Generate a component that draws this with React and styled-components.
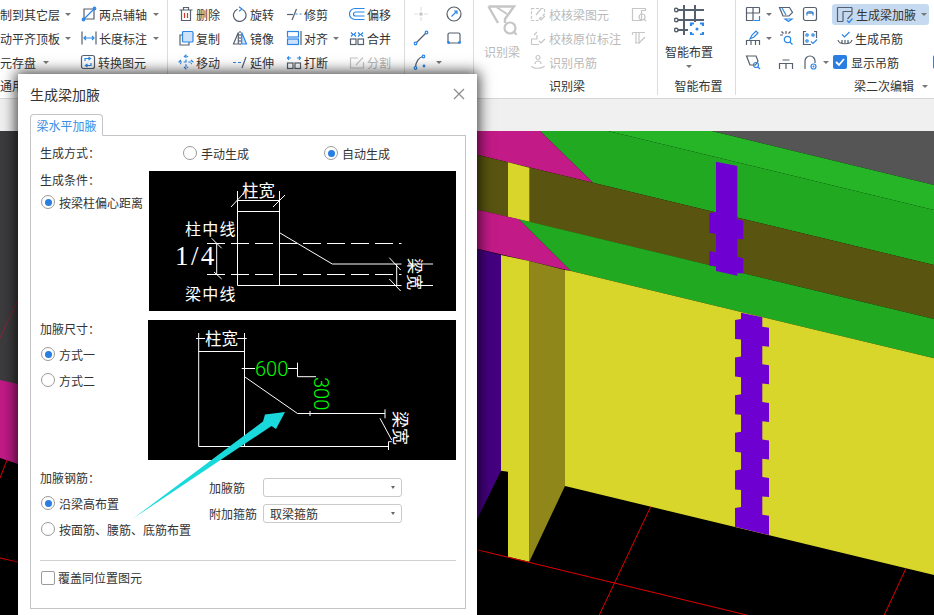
import styled, { createGlobalStyle } from 'styled-components'

const ink = '#333'
const blue = '#2b87e8'
const radioBlue = '#2a7de1'
const lineGray = '#c4c4c8'
const disabled = '#b9b9b9'

const GlobalStyle = createGlobalStyle`
  html, body { margin: 0; padding: 0; background: #f0f0f0; }
  body { font-family: "Noto Sans CJK SC", "Noto Sans", sans-serif; font-size: 12px; color: ${ink}; }
`

const Page = styled.div`
  position: relative;
  width: 934px;
  height: 615px;
  overflow: hidden;
  display: flex;
  flex-direction: column;
`
const Ribbon = styled.div`
  height: 98px;
  display: flex;
  flex-shrink: 0;
  background: #fff;
  border-bottom: 1px solid #d6d6d6;
  overflow: hidden;
`
const Group = styled.div`
  width: ${p => p.$w}px;
  flex-shrink: 0;
  height: 95px;
  box-sizing: border-box;
  padding-left: ${p => p.$pad || 0}px;
  display: flex;
  flex-direction: column;
  border-right: ${p => (p.$last ? 'none' : '1px solid #dcdcdc')};
`
const Tools = styled.div`
  height: 75px;
  padding-top: 2px;
  display: flex;
`
const GroupLabel = styled.div`
  flex: 1;
  display: flex;
  align-items: center;
  justify-content: ${p => p.$align || 'center'};
  gap: 5px;
  padding: ${p => p.$padding || '0'};
  line-height: 18px;
  white-space: nowrap;
`
const Column = styled.div`
  width: ${p => p.$w}px;
  flex-shrink: 0;
  display: flex;
  flex-direction: column;
`
const Tool = styled.div`
  height: 24px;
  display: flex;
  align-items: center;
  gap: ${p => p.$gap ?? 2}px;
  white-space: nowrap;
  color: ${p => (p.$off ? disabled : ink)};
  border-radius: 3px;
  margin-left: ${p => p.$shift || 0}px;
`
const ActiveTool = styled(Tool)`
  width: 97px;
  height: 21px;
  margin: 2px 0 1px;
  padding-left: 4px;
  box-sizing: border-box;
  gap: 2px;
  background: #c5daf1;
`
const Caret = styled.i`
  width: 0;
  height: 0;
  margin-left: ${p => p.$gap ?? 3}px;
  border: 3px solid transparent;
  border-top: 3.5px solid #777;
  border-bottom: 0;
  flex-shrink: 0;
`
const BigTool = styled.div`
  width: ${p => p.$w}px;
  flex-shrink: 0;
  display: flex;
  flex-direction: column;
  align-items: center;
  color: ${p => (p.$off ? disabled : ink)};
  line-height: 18px;
  gap: 8px;
  padding-top: 3px;
`
const BigCaret = styled(Caret)`
  margin: -4px 0 0;
`
const Glyph = styled.svg`
  width: ${p => p.$size || 16}px;
  height: ${p => p.$size || 16}px;
  flex-shrink: 0;
  fill: none;
  stroke: ${p => (p.$off ? '#c6c6c6' : '#56606e')};
  stroke-width: 1.2;
  .b { stroke: ${p => (p.$off ? '#c6c6c6' : blue)}; }
  .r { stroke: #d8352a; }
  .f { fill: #cfe2fa; stroke: ${blue}; }
  .d { fill: ${blue}; stroke: none; }
`
const RibbonCheck = styled.span`
  width: 14px;
  height: 14px;
  flex-shrink: 0;
  border-radius: 2px;
  background: #2a7de1;
  display: flex;
  align-items: center;
  justify-content: center;
  margin-left: ${p => p.$left || 0}px;
`
const Band = styled.div`
  height: 32px;
  flex-shrink: 0;
  background: #f0f0f0;
`
const Scene = styled.svg`
  display: block;
  width: 934px;
  height: 484px;
  flex-shrink: 0;
  background: #000;
`
const Dialog = styled.div`
  position: absolute;
  left: 18px;
  top: 74px;
  width: 459px;
  height: 560px;
  box-sizing: border-box;
  padding: 0 11px 0 12px;
  background: #fff;
  box-shadow: 0 0 13px 2px rgba(0, 0, 0, 0.75);
`
const TitleBar = styled.div`
  height: 40px;
  display: flex;
  align-items: center;
  justify-content: space-between;
  font-size: 14px;
  line-height: 20px;
  padding-right: 1px;
`
const Close = styled.svg`
  width: 12px;
  height: 12px;
  stroke: #8c8c8c;
  stroke-width: 1.2;
`
const Tab = styled.div`
  position: relative;
  z-index: 1;
  width: 73px;
  height: 22px;
  box-sizing: border-box;
  border: 1px solid ${lineGray};
  border-bottom: 1px solid #fff;
  border-radius: 4px 4px 0 0;
  margin-bottom: -1px;
  display: flex;
  align-items: center;
  justify-content: center;
  color: #3a8ee6;
`
const Panel = styled.div`
  height: 474px;
  box-sizing: border-box;
  border: 1px solid ${lineGray};
  padding: 8px 9px 0;
`
const MethodRow = styled.div`
  height: 18px;
  display: grid;
  grid-template-columns: 143px 141px auto;
  align-items: center;
`
const SplitRow = styled.div`
  display: flex;
  margin-top: ${p => p.$top}px;
`
const LeftCol = styled.div`
  width: ${p => p.$w}px;
  flex-shrink: 0;
  display: flex;
  flex-direction: column;
`
const FieldLabel = styled.div`
  height: 18px;
  line-height: 18px;
  white-space: nowrap;
`
const Option = styled.div`
  height: 18px;
  display: flex;
  align-items: center;
  gap: 4px;
  white-space: nowrap;
  margin-top: ${p => p.$top || 0}px;
  margin-left: ${p => p.$left ?? 1}px;
`
const Radio = styled.span`
  width: 14px;
  height: 14px;
  box-sizing: border-box;
  border: 1px solid #9a9a9a;
  border-radius: 50%;
  flex-shrink: 0;
  background: #fff;
  display: flex;
  align-items: center;
  justify-content: center;
  &::after {
    content: '';
    width: 7px;
    height: 7px;
    border-radius: 50%;
    background: ${p => (p.$on ? radioBlue : 'transparent')};
  }
`
const Sketch = styled.svg`
  display: block;
  width: ${p => p.$w}px;
  height: 140px;
  background: #000;
  flex-shrink: 0;
  stroke: #fff;
  stroke-width: 1;
  fill: none;
  text { fill: #fff; stroke: none; font-family: "Noto Sans CJK SC", sans-serif; }
  text.num { fill: #00ff00; font-family: Roboto, "Liberation Sans", sans-serif; font-weight: 300; }
  text.frac { font-family: "Liberation Serif", serif; }
`
const SelectCol = styled.div`
  display: flex;
  flex-direction: column;
  gap: 7px;
  padding-top: 9px;
`
const SelectRow = styled.div`
  display: flex;
  align-items: center;
`
const SelectName = styled.span`
  width: 54px;
  white-space: nowrap;
`
const SelectBox = styled.div`
  width: 139px;
  height: 19px;
  box-sizing: border-box;
  border: 1px solid #cacaca;
  border-radius: 3px;
  padding: 0 6px;
  display: flex;
  align-items: center;
  justify-content: space-between;
`
const SmallCaret = styled(Caret)`
  margin: 0;
  border-width: 3px 2.5px 0;
  border-top-color: #666;
`
const Divider = styled.div`
  height: 1px;
  background: #d2d2d2;
  margin-top: ${p => p.$top}px;
`
const CheckOption = styled.div`
  display: flex;
  align-items: center;
  gap: 3px;
  margin: 8px 0 0 1px;
`
const CheckBox = styled.span`
  width: 14px;
  height: 14px;
  box-sizing: border-box;
  border: 1px solid #9a9a9a;
  border-radius: 2px;
`
const Arrow = styled.svg`
  position: absolute;
  left: 0;
  top: 0;
  width: 934px;
  height: 615px;
  pointer-events: none;
`

const icons = {
  axis: <><path d="M3 3H13V13H3Z" /><path className="b" d="M2 14L14 2" /><circle className="b" cx="2.5" cy="13.5" r="1.3" /><circle className="b" cx="13.5" cy="2.5" r="1.3" /></>,
  dim: <><path d="M1 1.5V14.5M15 1.5V14.5" /><path className="b" d="M3 8H13M5 6L3 8L5 10M11 6L13 8L11 10" /></>,
  convert: <><rect x="1.5" y="1.5" width="13" height="13" rx="2" /><path className="b" d="M5 7V4.5H10M8.5 3L10.5 4.5L8.5 6M11 9V11.5H6M7.5 10L5.5 11.5L7.5 13" /></>,
  trash: <><path d="M3.5 4V14.5H12.5V4M1.5 4H14.5M5.5 4V1.5H10.5V4" /><path className="r" d="M6.5 7V12M9.5 7V12" /></>,
  copy: <><path d="M4 5H2V15H11V12" /><rect className="f" x="4.5" y="1.5" width="10.5" height="10.5" rx="1" /></>,
  move: <path className="b" d="M8 1V15M1 8H15M6 3L8 1L10 3M6 13L8 15L10 13M3 6L1 8L3 10M13 6L15 8L13 10" strokeDasharray="3 1.6" />,
  rotate: <><path d="M10.5 3.5A6.3 6.3 0 1 1 5.5 3.3" /><path className="b" d="M7 .8L10 3L7 5.2" /></>,
  mirror: <><path d="M6.3 2.5L1.5 14H6.3Z" /><path d="M8 1V15" strokeDasharray="2 1" /><path className="f" d="M9.7 2.5L14.5 14H9.7Z" /></>,
  trim: <><path d="M1 8.5H7" /><path d="M10.5 3L6 14" /><path className="b" d="M9.5 8H15.5" strokeDasharray="2 2" /></>,
  extend: <><path className="b" d="M1 8.5H9" strokeDasharray="3 2" /><path d="M14 3L10 14" /></>,
  align: <><rect className="b" x="1.5" y="1.5" width="11" height="5.5" /><rect className="f" x="1.5" y="9" width="11" height="5.5" /><path d="M15 1V15" /></>,
  breakIt: <><rect x="1.5" y="9" width="5.5" height="5.5" /><rect x="9" y="9" width="5.5" height="5.5" /><path className="b" d="M3 6L1.5 4L3 2.5M1.5 4H5M13 6L14.5 4L13 2.5M14.5 4H11" /></>,
  merge: <><rect x="1.5" y="9" width="5.5" height="5.5" /><rect x="9" y="9" width="5.5" height="5.5" /><path className="b" d="M2 2.5L4 4.5L2 6.5M7 2.5L5 4.5L7 6.5M9 2.5L11 4.5L9 6.5M14 2.5L12 4.5L14 6.5" /></>,
  offset: <path className="b" d="M15.5 2.5H6A5.5 5.5 0 0 0 6 13.5H15.5M15.5 6H6.5A2 2 0 0 0 6.5 10H15.5" />,
  split: <><path d="M9 4H1.5V14H14.5V8" /><path d="M7 11L14 3.5" /></>,
  point: <><path d="M8 1V5M8 11V15M1 8H5M11 8H15" strokeOpacity=".55" /><circle cx="8" cy="8" r="1.5" fill="#c8c8c8" strokeOpacity=".5" /></>,
  gauge: <><circle cx="8" cy="8" r="7" /><path className="b" d="M5.5 10.5L11 5M8 5H11V8" /></>,
  line: <><path d="M3 13L13 3" /><circle className="b" cx="2.5" cy="13.5" r="1.3" fill="#fff" /><circle className="b" cx="13.5" cy="2.5" r="1.3" fill="#fff" /></>,
  box: <><rect x="2" y="3" width="12" height="10" rx="1.5" /><circle className="d" cx="2.5" cy="12.5" r="1.4" /><circle className="d" cx="13.5" cy="12.5" r="1.4" /></>,
  arc: <><path d="M2.5 14C2.5 8 6 3 10 2.5" /><circle className="b" cx="2.5" cy="14" r="1.3" fill="#fff" /><circle className="b" cx="10.5" cy="2.5" r="1.3" fill="#fff" /><circle className="d" cx="11" cy="12" r="1.4" /></>,
  checkBeam: <><path d="M1.5 2.5H14.5V8L8 14.5H1.5Z" strokeDasharray="3 1.5" /><path d="M6 9L11 3" /><path d="M9 12L11 14L15 10" /></>,
  checkMark: <><path d="M1.5 14.5V9H7V5M1.5 14.5H9" /><path d="M4 5L7 2M9 11L11 13L15 9" /></>,
  hook: <><path d="M1.5 12C3 15 12 15 14.5 12M5 10A3 3 0 1 1 11 10" /><circle cx="8" cy="3.5" r="2" /></>,
  beamList: <><path d="M1.5 2.5H14.5V4.5H10.5V14.5H1.5Z" /><circle cx="11" cy="11" r="3" /><path d="M13 13L15 15" /></>,
  penBeam: <><path d="M1.5 2.5H14M1.5 2.5V5M5 2.5V13M8 2.5V13M4 13H9" /><path d="M8 13L14 7" /></>,
  table: <><path d="M1.5 1.5H14.5M1.5 1.5V14.5H8M1.5 7H14.5M8 1.5V14.5M14.5 1.5V7" /><path className="b" d="M8.5 14.5H14.5V10" /></>,
  funnel: <><path d="M1.5 1.5H11.5L14.5 6.5L11 10H5Z" /><path className="b" d="M7 13H14L10.5 15.5Z" /><path className="b" d="M4 2L8 9" /></>,
  beamBox: <><rect x="1.5" y="1.5" width="13" height="13" rx="2" /><path d="M4.5 7H11.5" /><path className="b" d="M5 9.5V7.5C5 5 11 5 11 7.5V9.5" /></>,
  pencil: <><path d="M1.5 15V10.5H14.5V15M6 10.5V15M10.5 10.5V15" /><path className="b" d="M5 9L7 5L11 1L13 3L9 7Z" /></>,
  spark: <><path d="M2 5H5M8 1V4M3.5 1.5L5.5 3.5M12.5 1.5L10.5 3.5" /><circle className="b" cx="9.5" cy="9.5" r="3.2" /><path className="b" d="M12 12L14.5 14.5" /></>,
  dots: <><path d="M4 1.5H1.5V14.5H9M12 1.5H14.5V8" /><circle className="b" cx="5" cy="5" r="1.2" /><circle className="b" cx="11" cy="5" r="1.2" /><circle className="b" cx="5" cy="11" r="1.2" /><path className="b" d="M9 11.5L11 13.5L15 9.5" /></>,
  cone: <><path d="M1.5 2H11L13 7L10.5 11H5Z" /><circle className="b" cx="11" cy="11" r="2.5" /><path className="b" d="M13 13L15 15" /></>,
  gate: <><path d="M1.5 15V9.5H14.5V15M8 9.5V15M4.5 6H11.5" /></>,
  hoop: <><path d="M3 15V7A5 5 0 0 1 13 7V9" /><circle className="b" cx="11.5" cy="12.5" r="2.5" /><circle className="d" cx="11.5" cy="12.5" r="1" /></>,
  haunch: <><path d="M1.5 1.5H16M1.5 1.5V15.5H7M7 5.5V15.5M7 5.5H16M16 1.5V8L11.5 13" /><path className="b" d="M11 14.5L13 16.5L16.5 12.5" /></>,
  hanger: <><path d="M1 10C2 15 14 15 15 10M5 10V13M11 10V13M8 10V13" /><path className="b" d="M5 4.5L7.5 7L12.5 2" /></>,
  bigFilter: <><path d="M1.5 1.5H27L18 14L18 18M11 18L1.5 1.5" strokeWidth="2.4" /><path d="M10 2.5L20 9" strokeWidth="2" /><circle cx="23" cy="23" r="5.5" strokeWidth="2.2" /><path d="M27 27L30 30" strokeWidth="2.2" /></>,
  bigGrid: <><path d="M10 0V30M21 0V17M4 5H30M4 15H30M4 25H14" strokeWidth="2" /><circle cx="2.2" cy="5" r="1.8" strokeWidth="1.4" /><circle cx="2.2" cy="15" r="1.8" strokeWidth="1.4" /><circle cx="2.2" cy="25" r="1.8" strokeWidth="1.4" /><path className="b" d="M17 21V18.5H20M26 18.5H29V21M29 27V29.5H26M20 29.5H17V27" strokeWidth="2.2" /><circle className="d" cx="23" cy="24" r="1.5" /></>,
}

const Icon = ({ name, size = 16, off }) => (
  <Glyph viewBox={`0 0 ${size} ${size}`} $size={size} $off={off}>{icons[name]}</Glyph>
)

const TickMark = () => (
  <svg width="10" height="10" viewBox="0 0 10 10" fill="none" stroke="#fff" strokeWidth="1.8"><path d="M1 5L4 8L9 2" /></svg>
)

// stepped purple stirrup strip: teeth stick out on both sides
const lowerStrip = (() => {
  const pts = [[741, 312.7], [762.3, 317.3]]
  for (let i = 0; i < 6; i++) {
    const y = 327.7 + i * 37.6
    pts.push([762.3, y - 1], [769, y], [769, i === 5 ? 535 : y + 19], [762.3, i === 5 ? 533.5 : y + 18.3])
  }
  for (let i = 5; i >= 0; i--) {
    const y = 320 + i * 37.6
    if (i === 5) pts.push([735, 526.7])
    else pts.push([741, y + 19.6], [735, y + 19])
    pts.push([735, y], [741, y - 1])
  }
  return pts.map(p => p.join(',')).join(' ')
})()

const upperStrip = '716,161.7 737.3,166 737.3,219.3 743.3,220.7 743.3,239.3 737.3,239 737.3,256.7 743.3,258.3 743.3,273.3 737.3,273.3 737.3,275.7 716,271 716,266 709.3,265.7 709.3,251 716,252.5 716,234 709.3,232.7 709.3,213.3 716,211.7'

const Model = () => (
  <Scene viewBox="0 131 934 484">
    <polygon points="0,131 478,131 478,400 0,384" fill="#3c3c3e" />
    <path d="M18 300L0 338" stroke="#8a2535" strokeWidth="1" />
    <polygon points="0,380 18,384 18,464 0,458" fill="#c01a86" />
    <path d="M7 460L0 478M0 558L18 562" stroke="#e00000" strokeWidth="1" />
    <polygon points="711.7,131 934,131 934,185" fill="#555" />
    <polygon points="608,131 711.7,131 934,185 934,210" fill="#26b526" />
    <polygon points="540,131 608,131 934,210 934,265 593,182.7" fill="#22a922" />
    <polygon points="470,131 540,131 593,182.7 470,153" fill="#c21a87" />
    <polygon points="470,153 934,265 934,319 470,208" fill="#59540f" />
    <polygon points="508,162.3 529.3,167.7 529.3,221.7 508,216.7" fill="#d9d52a" />
    <polygon points="470,208 519,219.3 571,271 470,247" fill="#c21a87" />
    <polygon points="519,219.3 934,319 934,358.3 571,271" fill="#22a922" />
    <polygon points="571,271 934,358.3 934,575 565,486 565,270" fill="#d8d62a" />
    <polygon points="529.3,261 565,270 565,486 529.3,561.7" fill="#8f871a" />
    <polygon points="501,255 529.3,261 529.3,561.7 508,556.7 508,471.7 501,470.7" fill="#d8d62a" />
    <polygon points="470,247 501,255 501,470.7 470,534" fill="#44007f" />
    <polygon points={upperStrip} fill="#6f00d2" />
    <polygon points={lowerStrip} fill="#6f00d2" />
    <g stroke="#e00000" strokeWidth="1" fill="none">
      <path d="M478 550L746.7 615" />
      <path d="M650.7 506.7L599.3 615" />
      <path d="M906 568.3L884.3 615" />
    </g>
  </Scene>
)

const ConditionSketch = () => (
  <Sketch viewBox="149 171 307 140" $w={307}>
    <path d="M237.5 191V285.5M279.5 191V285.5M237.5 200.5H279.5M237.5 211.5H279.5" />
    <path d="M231 207L244 193M273 207L285 195" />
    <path d="M279.5 232.7L332.3 264H401.5M408 264H433M237.5 285.5H401.5M418 285.5H433" />
    <path d="M207 243.5H401.5M207 274.5H401.5" strokeDasharray="18 6" />
    <path d="M216.7 243.5V274.5M211.7 238.3L221.7 248.3M214 272L221.7 279" />
    <path d="M396.7 264V285.5M389.3 257.7L400.7 270M389.3 279L400.7 291" />
    <text x="242" y="197" fontSize="16.5">柱宽</text>
    <text x="185" y="235" fontSize="16" letterSpacing="1.2">柱中线</text>
    <text x="185" y="300" fontSize="16" letterSpacing="1.2">梁中线</text>
    <text className="frac" x="175" y="265" fontSize="27" letterSpacing="2.4">1/4</text>
    <text transform="translate(409 258) rotate(90)" fontSize="16">梁宽</text>
  </Sketch>
)

const SizeSketch = () => (
  <Sketch viewBox="148 320 308 140" $w={308}>
    <path d="M198.7 333V446.5M244.5 333V446.5M196 338.5H205M237.3 338.5H246.7M198.7 351.5H244.5" />
    <path d="M241.7 368.5H255M288 368.5H298M297.5 362.7V376.7H316" />
    <path d="M244.5 376.7L297.5 413.5H385M385 409.3V418.3M380 418.3L391.7 440M198.7 446.5H388.5M388.5 441.7V450M388.5 441.7H391.7M310 411V416" />
    <text x="205" y="345" fontSize="16.5">柱宽</text>
    <text className="num" x="255" y="376" fontSize="20">600</text>
    <text className="num" transform="translate(314 377) rotate(90)" fontSize="20">300</text>
    <text transform="translate(394 411) rotate(90)" fontSize="17">梁宽</text>
  </Sketch>
)

export default function App() {
  return (
    <Page>
      <GlobalStyle />
      <Ribbon>
        <Group $w={168}>
          <Tools>
            <Column $w={81}>
              <Tool>制到其它层<Caret /></Tool>
              <Tool>动平齐顶板<Caret /></Tool>
              <Tool>元存盘<Caret $gap={5} /></Tool>
            </Column>
            <Column $w={80}>
              <Tool><Icon name="axis" />两点辅轴<Caret $gap={4} /></Tool>
              <Tool><Icon name="dim" />长度标注<Caret $gap={4} /></Tool>
              <Tool $shift={-1}><Icon name="convert" />转换图元</Tool>
            </Column>
          </Tools>
          <GroupLabel $align="flex-start">通用</GroupLabel>
        </Group>
        <Group $w={237} $pad={10}>
          <Tools>
            <Column $w={54}>
              <Tool><Icon name="trash" />删除</Tool>
              <Tool><Icon name="copy" />复制</Tool>
              <Tool><Icon name="move" />移动</Tool>
            </Column>
            <Column $w={54}>
              <Tool><Icon name="rotate" />旋转</Tool>
              <Tool><Icon name="mirror" />镜像</Tool>
              <Tool><Icon name="extend" />延伸</Tool>
            </Column>
            <Column $w={63}>
              <Tool><Icon name="trim" />修剪</Tool>
              <Tool><Icon name="align" />对齐<Caret /></Tool>
              <Tool><Icon name="breakIt" />打断</Tool>
            </Column>
            <Column $w={44}>
              <Tool><Icon name="offset" />偏移</Tool>
              <Tool><Icon name="merge" />合并</Tool>
              <Tool $off><Icon name="split" off />分割</Tool>
            </Column>
          </Tools>
        </Group>
        <Group $w={69} $pad={8}>
          <Tools>
            <Column $w={33}>
              <Tool><Icon name="point" off /></Tool>
              <Tool><Icon name="line" /></Tool>
              <Tool><Icon name="arc" /><Caret $gap={5} /></Tool>
            </Column>
            <Column $w={20}>
              <Tool><Icon name="gauge" /></Tool>
              <Tool><Icon name="box" /></Tool>
            </Column>
          </Tools>
        </Group>
        <Group $w={184} $pad={9}>
          <Tools>
            <BigTool $w={38} $off>
              <Icon name="bigFilter" size={30} off />
              识别梁
            </BigTool>
            <Column $w={110}>
              <Tool $off $shift={9} $gap={3}><Icon name="checkBeam" off />校核梁图元</Tool>
              <Tool $off $shift={9} $gap={3}><Icon name="checkMark" off />校核原位标注</Tool>
              <Tool $off $shift={9} $gap={3}><Icon name="hook" off />识别吊筋</Tool>
            </Column>
            <Column $w={20}>
              <Tool $off><Icon name="beamList" off /></Tool>
              <Tool $off><Icon name="penBeam" off /></Tool>
            </Column>
          </Tools>
          <GroupLabel $padding="0 6px 0 0">识别梁</GroupLabel>
        </Group>
        <Group $w={78} $pad={7}>
          <Tools>
            <BigTool $w={48}>
              <Icon name="bigGrid" size={30} />
              智能布置
              <BigCaret />
            </BigTool>
          </Tools>
          <GroupLabel $padding="0 3px 0 0">智能布置</GroupLabel>
        </Group>
        <Group $w={198} $pad={9} $last>
          <Tools>
            <Column $w={33}>
              <Tool><Icon name="table" /><Caret /></Tool>
              <Tool><Icon name="pencil" /><Caret /></Tool>
              <Tool><Icon name="cone" /></Tool>
            </Column>
            <Column $w={24}>
              <Tool><Icon name="funnel" /></Tool>
              <Tool><Icon name="spark" /></Tool>
              <Tool><Icon name="gate" /></Tool>
            </Column>
            <Column $w={30}>
              <Tool><Icon name="beamBox" /></Tool>
              <Tool><Icon name="dots" /></Tool>
              <Tool><Icon name="hoop" /><Caret /></Tool>
            </Column>
            <Column $w={100}>
              <ActiveTool><Icon name="haunch" size={18} />生成梁加腋<Caret $gap={3} /></ActiveTool>
              <Tool $shift={5}><Icon name="hanger" />生成吊筋</Tool>
              <Tool $gap={4} $shift={1}>
                <RibbonCheck><TickMark /></RibbonCheck>显示吊筋
                <RibbonCheck $left={30} />
              </Tool>
            </Column>
          </Tools>
          <GroupLabel $align="flex-end" $padding="0 6px 0 0">梁二次编辑<Caret $gap={3} /></GroupLabel>
        </Group>
      </Ribbon>
      <Band />
      <Model />
      <Dialog>
        <TitleBar>
          生成梁加腋
          <Close viewBox="0 0 12 12"><path d="M1 1L11 11M11 1L1 11" /></Close>
        </TitleBar>
        <Tab>梁水平加腋</Tab>
        <Panel>
          <MethodRow>
            <FieldLabel>生成方式：</FieldLabel>
            <Option $left={0}><Radio />手动生成</Option>
            <Option $left={0}><Radio $on />自动生成</Option>
          </MethodRow>
          <SplitRow $top={9}>
            <LeftCol $w={109}>
              <FieldLabel>生成条件：</FieldLabel>
              <Option $top={4}><Radio $on />按梁柱偏心距离</Option>
            </LeftCol>
            <ConditionSketch />
          </SplitRow>
          <SplitRow $top={9}>
            <LeftCol $w={108}>
              <FieldLabel>加腋尺寸：</FieldLabel>
              <Option $top={7}><Radio $on />方式一</Option>
              <Option $top={8}><Radio />方式二</Option>
            </LeftCol>
            <SizeSketch />
          </SplitRow>
          <SplitRow $top={9}>
            <LeftCol $w={169}>
              <FieldLabel>加腋钢筋：</FieldLabel>
              <Option $top={7}><Radio $on />沿梁高布置</Option>
              <Option $top={8}><Radio />按面筋、腰筋、底筋布置</Option>
            </LeftCol>
            <SelectCol>
              <SelectRow><SelectName>加腋筋</SelectName><SelectBox><span /><SmallCaret /></SelectBox></SelectRow>
              <SelectRow><SelectName>附加箍筋</SelectName><SelectBox>取梁箍筋<SmallCaret /></SelectBox></SelectRow>
            </SelectCol>
          </SplitRow>
          <Divider $top={22} />
          <CheckOption><CheckBox />覆盖同位置图元</CheckOption>
        </Panel>
      </Dialog>
      <Arrow viewBox="0 0 934 615">
        <polygon points="133,518.5 263,421.5 265,414.5 285,412 276,429 271.5,426" fill="#19d9dc" />
      </Arrow>
    </Page>
  )
}
